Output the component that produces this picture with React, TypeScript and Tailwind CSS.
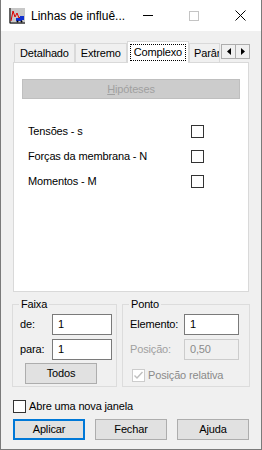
import React from 'react';

const font = { fontFamily: '"Liberation Sans", Arial, sans-serif' };

function AppIcon() {
  return (
    <svg width="16" height="16" viewBox="0 0 16 16" className="shrink-0">
      <rect x="0" y="0" width="16" height="16" fill="#c8c8c8" />
      <path d="M1 0 V15 H16" stroke="#000" strokeWidth="1" fill="none" />
      <path d="M2 13 L4 3 L6 9 L8 5 L10 10 L12 8" stroke="#e00000" strokeWidth="1" fill="none" />
      <rect x="7" y="10" width="6" height="3" fill="#1030d0" />
      <rect x="11" y="8" width="4" height="4" fill="#1030d0" />
      <circle cx="8.5" cy="13.5" r="1" fill="#000" />
      <circle cx="12.5" cy="13.5" r="1" fill="#000" />
    </svg>
  );
}

function Box({ checked = false, disabled = false }: { checked?: boolean; disabled?: boolean }) {
  return (
    <span
      className={`flex h-[13px] w-[13px] shrink-0 items-center justify-center border bg-white ${
        disabled ? 'border-[#cccccc]' : 'border-[#333333]'
      }`}
    >
      {checked && (
        <svg width="11" height="11" viewBox="0 0 11 11">
          <path d="M1.5 5.5 L4 8 L9.5 2" stroke={disabled ? '#bfbfbf' : '#000'} strokeWidth="1.4" fill="none" />
        </svg>
      )}
    </span>
  );
}

function Field({ value, disabled = false, w = 'w-[60px]' }: { value: string; disabled?: boolean; w?: string }) {
  return (
    <div
      className={`flex h-[21px] ${w} shrink-0 items-center border px-[5px] ${
        disabled ? 'border-[#cccccc] bg-[#f0f0f0] text-[#8a8a8a]' : 'border-[#7a7a7a] bg-white text-black'
      }`}
    >
      {value}
    </div>
  );
}

function Btn({ label, focused = false, w = 'w-[72px]' }: { label: string; focused?: boolean; w?: string }) {
  return (
    <div
      className={`flex h-[21px] ${w} items-center justify-center bg-[#e1e1e1] ${
        focused ? 'border-2 border-[#0078d7]' : 'border border-[#adadad]'
      }`}
    >
      {label}
    </div>
  );
}

const tabs = ['Detalhado', 'Extremo', 'Complexo', 'Parân'];

export default function App() {
  return (
    <div
      className="flex h-[450px] w-[262px] flex-col overflow-hidden border-x border-b border-x-[#7a7a7a] border-b-[#7a7a7a] bg-[#f0f0f0] text-[11px] tracking-[-0.15px] text-black"
      style={font}
    >
      {/* title bar */}
      <div className="flex h-[31px] shrink-0 items-center bg-white pl-[8px]">
        <AppIcon />
        <span className="ml-[6px] whitespace-nowrap text-[12px] tracking-normal">Linhas de influê...</span>
        <div className="ml-auto flex h-full items-center">
          <div className="flex h-full w-[46px] items-center justify-center">
            <div className="h-px w-[10px] bg-black" />
          </div>
          <div className="flex h-full w-[46px] items-center justify-center">
            <div className="h-[10px] w-[10px] border border-[#c4c4c4]" />
          </div>
          <div className="flex h-full w-[46px] items-center justify-center">
            <svg width="11" height="11" viewBox="0 0 11 11">
              <path d="M0.5 0.5 L10.5 10.5 M10.5 0.5 L0.5 10.5" stroke="#000" strokeWidth="1" />
            </svg>
          </div>
        </div>
      </div>

      <div className="flex flex-1 flex-col px-[11px] pt-[11px]">
        {/* tabs */}
        <div className="flex h-[20px] items-end pl-[2px]">
          {tabs.map((t) => {
            const sel = t === 'Complexo';
            const last = t === 'Parân';
            return (
              <div
                key={t}
                className={`flex items-center border border-b-0 border-[#d9d9d9] ${
                  sel ? 'relative z-10 -mb-px h-[22px] bg-white px-[2px]' : 'h-[19px] bg-[#f0f0f0] px-[5px]'
                } ${last ? 'w-[33px] overflow-hidden pl-[4px] pr-0' : ''}`}
              >
                {sel ? (
                  <span className="whitespace-nowrap border border-dotted border-black px-[3px] leading-[15px]">{t}</span>
                ) : (
                  <span className="whitespace-nowrap">{t}</span>
                )}
              </div>
            );
          })}
          <div className="mb-[3px] ml-px flex h-[15px]">
            <div className="flex w-[15px] items-center justify-center border border-[#adadad] bg-[#f0f0f0]">
              <svg width="4" height="7" viewBox="0 0 4 7"><path d="M4 0 L0 3.5 L4 7 Z" fill="#000" /></svg>
            </div>
            <div className="-ml-px flex w-[15px] items-center justify-center border border-[#adadad] bg-[#f0f0f0]">
              <svg width="4" height="7" viewBox="0 0 4 7"><path d="M0 0 L4 3.5 L0 7 Z" fill="#000" /></svg>
            </div>
          </div>
        </div>

        {/* tab panel */}
        <div className="mx-px flex h-[230px] flex-col border border-[#d9d9d9] bg-white px-[8px] pt-[16px]">
          <div className="flex h-[20px] items-center justify-center border border-[#bfbfbf] bg-[#cccccc] text-[#a0a0a0]">
            <span><span className="underline">H</span>ipóteses</span>
          </div>
          <div className="mt-[24px] flex flex-col gap-[8px] pl-[6px] pr-[36px]">
            {['Tensões - s', 'Forças da membrana - N', 'Momentos - M'].map((r) => (
              <div key={r} className="flex h-[17px] items-center justify-between">
                <span className="whitespace-nowrap">{r}</span>
                <Box />
              </div>
            ))}
          </div>
        </div>

        {/* groups */}
        <div className="mt-[12px] flex gap-[5px]">
          <div className="relative h-[83px] w-[105px] border border-[#dcdcdc] pl-[7px] pr-[4px] pt-[9px]">
            <span className="absolute -top-[8px] left-[6px] bg-[#f0f0f0] px-[2px] leading-[14px]">Faixa</span>
            <div className="flex flex-col gap-[4px]">
              <div className="flex items-center justify-between">
                <span>de:</span>
                <Field value="1" />
              </div>
              <div className="flex items-center justify-between">
                <span>para:</span>
                <Field value="1" />
              </div>
            </div>
            <div className="mt-[3px] pl-[5px]">
              <Btn label="Todos" />
            </div>
          </div>

          <div className="relative h-[83px] flex-1 border border-[#dcdcdc] pl-[7px] pr-[10px] pt-[9px]">
            <span className="absolute -top-[8px] left-[6px] bg-[#f0f0f0] px-[2px] leading-[14px]">Ponto</span>
            <div className="flex flex-col gap-[4px]">
              <div className="flex items-center justify-between">
                <span className="whitespace-nowrap">Elemento:</span>
                <Field value="1" w="w-[55px]" />
              </div>
              <div className="flex items-center justify-between text-[#a0a0a0]">
                <span className="whitespace-nowrap">Posição:</span>
                <Field value="0,50" disabled w="w-[55px]" />
              </div>
            </div>
            <div className="mt-[8px] flex items-center gap-[3px] pl-[2px] leading-[14px] text-[#8a8a8a]">
              <Box checked disabled />
              <span className="whitespace-nowrap">Posição relativa</span>
            </div>
          </div>
        </div>

        <div className="mt-[12px] flex h-[14px] items-center gap-[3px] pl-px leading-[14px]">
          <Box />
          <span className="whitespace-nowrap">Abre uma nova janela</span>
        </div>

        <div className="mt-[6px] flex justify-between px-px">
          <Btn label="Aplicar" focused />
          <Btn label="Fechar" />
          <Btn label="Ajuda" />
        </div>
      </div>
    </div>
  );
}
